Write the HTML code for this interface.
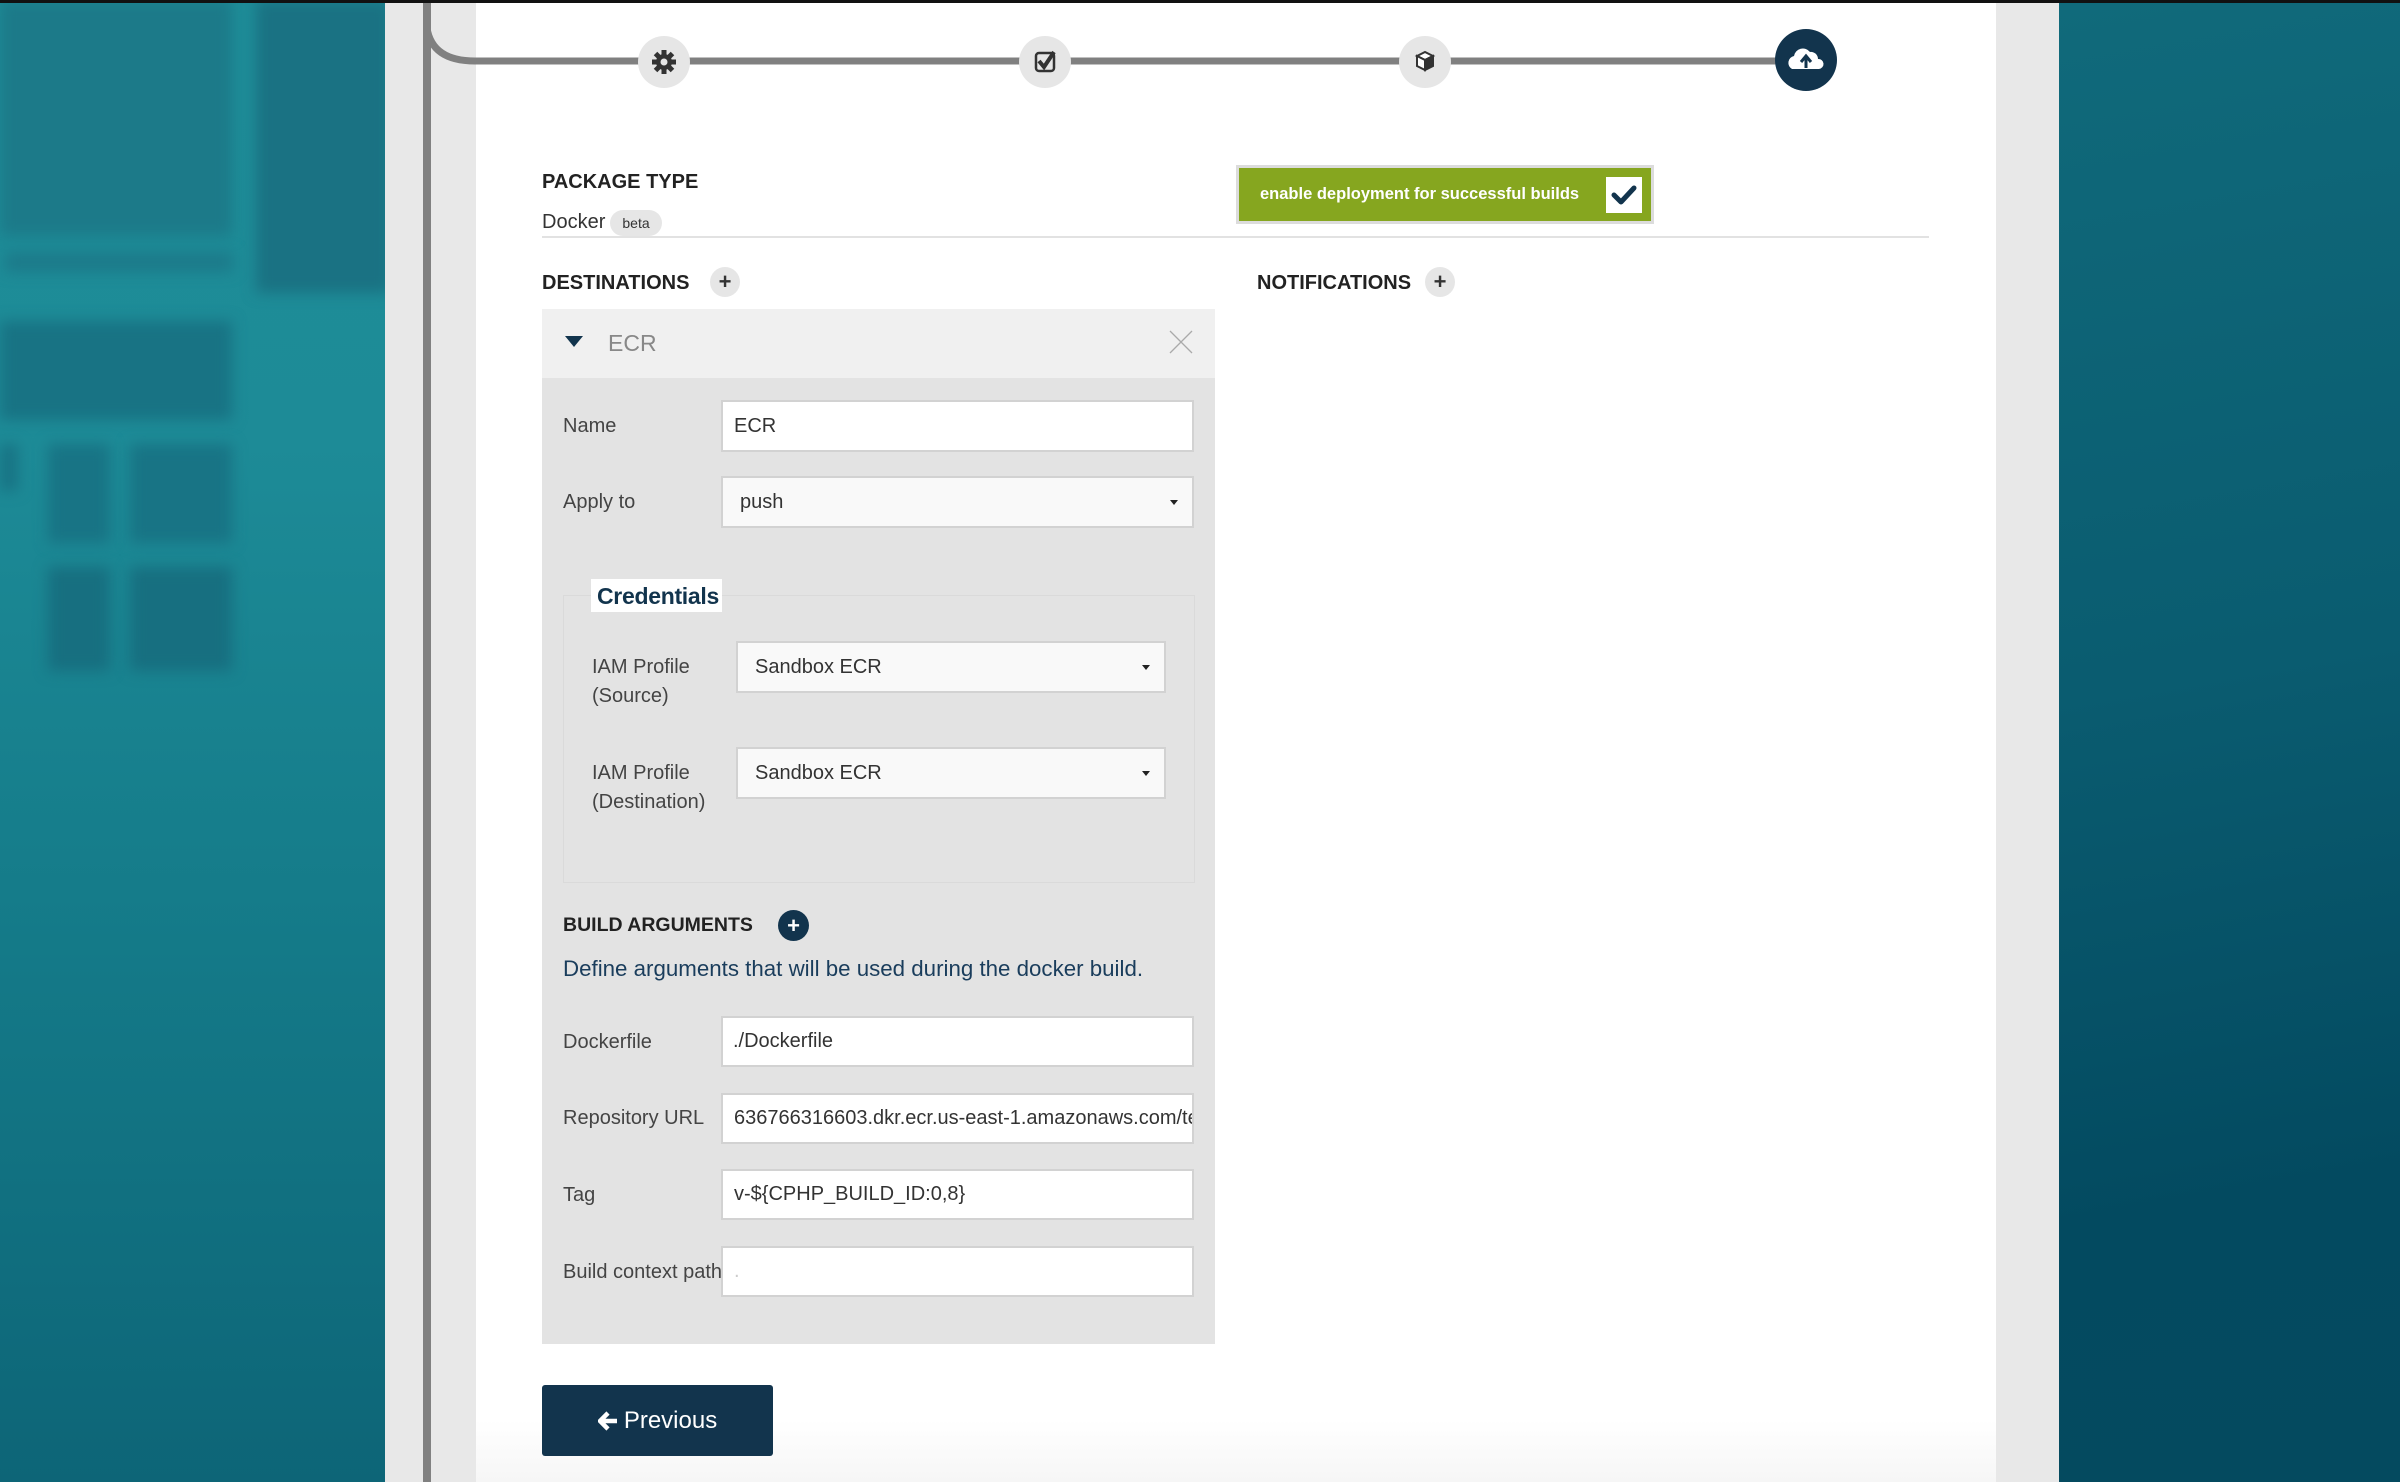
<!DOCTYPE html>
<html><head><meta charset="utf-8"><style>
*{box-sizing:border-box;margin:0;padding:0}
html,body{width:2400px;height:1482px;overflow:hidden;font-family:"Liberation Sans",Arial,sans-serif}
body{position:relative;background:#fff}
.a{position:absolute}
.lbl{position:absolute;font-size:20px;color:#444;line-height:29px}
.inp{position:absolute;background:#fff;border:2px solid #d2d2d2;font-size:20px;color:#333;padding-left:11px;display:flex;align-items:center;white-space:nowrap;overflow:hidden}
.sel{background:#f9f9f9}
.caret{position:absolute;right:14px;top:50%;margin-top:-2px;width:0;height:0;border-left:4px solid transparent;border-right:4px solid transparent;border-top:5px solid #222}
.h{position:absolute;font-size:20px;font-weight:bold;color:#222;line-height:24px}
.plus{position:absolute;width:30px;height:30px;border-radius:50%;background:#e6e6e6;color:#333;font-weight:bold;font-size:22px;text-align:center;line-height:30px}
.bl{position:absolute;filter:blur(7px)}
</style></head><body>
<!-- left teal -->
<div class="a" style="left:0;top:0;width:385px;height:1482px;background:linear-gradient(180deg,#1e8d98 0%,#1d8b97 30%,#157c8a 60%,#0d6577 100%);overflow:hidden">
  <div class="bl" style="left:0;top:0;width:232px;height:236px;background:#1c7a89"></div>
  <div class="bl" style="left:256px;top:0;width:135px;height:293px;background:#1a7283"></div>
  <div class="bl" style="left:5px;top:252px;width:228px;height:20px;background:#1c7a8a"></div>
  <div class="bl" style="left:0;top:321px;width:232px;height:99px;background:#187384"></div>
  <div class="bl" style="left:0;top:444px;width:18px;height:47px;background:#187384"></div>
  <div class="bl" style="left:48px;top:444px;width:62px;height:99px;background:#187485"></div>
  <div class="bl" style="left:130px;top:444px;width:102px;height:99px;background:#187485"></div>
  <div class="bl" style="left:48px;top:567px;width:62px;height:104px;background:#176f80"></div>
  <div class="bl" style="left:130px;top:567px;width:102px;height:104px;background:#176f80"></div>
</div>
<!-- right teal -->
<div class="a" style="left:2059px;top:0;width:341px;height:1482px;background:linear-gradient(170deg,#106a7b 0%,#0a5c70 45%,#034a60 80%,#044a5f 100%)"></div>
<!-- gray side panels -->
<div class="a" style="left:385px;top:0;width:91px;height:1482px;background:#e8e8e8"></div>
<div class="a" style="left:423px;top:0;width:8px;height:1482px;background:#808080"></div>
<div class="a" style="left:1996px;top:0;width:63px;height:1482px;background:#e8e8e8"></div>
<div class="a" style="left:476px;top:1420px;width:1520px;height:62px;background:linear-gradient(#fff,#f6f6f6)"></div>
<div class="a" style="left:0;top:0;width:2400px;height:3px;background:#111"></div>
<!-- progress -->
<svg class="a" style="left:0;top:0" width="2400" height="120">
  <path d="M427 28 Q432 61 475 61 L1790 61" stroke="#808080" stroke-width="7" fill="none"/>
  <circle cx="664" cy="62" r="26" fill="#e6e6e6"/>
  <circle cx="1045" cy="62" r="26" fill="#e6e6e6"/>
  <circle cx="1425" cy="62" r="26" fill="#e6e6e6"/>
  <circle cx="1806" cy="60" r="31" fill="#12344d"/>
  <g transform="translate(664,62)" fill="#333">
    <circle r="8"/>
    <rect x="-2.5" y="-12" width="5" height="24"/>
    <rect x="-2.5" y="-12" width="5" height="24" transform="rotate(45)"/>
    <rect x="-2.5" y="-12" width="5" height="24" transform="rotate(90)"/>
    <rect x="-2.5" y="-12" width="5" height="24" transform="rotate(135)"/>
    <circle r="3.5" fill="#e6e6e6"/>
  </g>
  <g transform="translate(1045,62)">
    <rect x="-9" y="-9" width="18" height="18" rx="3" fill="none" stroke="#333" stroke-width="2.5"/>
    <path d="M-6 -1 L-1 5 L9 -10" fill="none" stroke="#333" stroke-width="4"/>
  </g>
  <g transform="translate(1425,60)" stroke="#333" stroke-width="2" fill="#fff">
    <path d="M-8 -4 L0 -8 L8 -4 L0 0 Z"/>
    <path d="M-8 -4 L-8 6 L0 10 L0 0 Z"/>
    <path d="M8 -4 L8 6 L0 10 L0 0 Z" fill="#333"/>
  </g>
  <g transform="translate(1806,60)">
    <path d="M-14 9 A7 7 0 0 1 -12 -4 A9 9 0 0 1 4 -8 A7 7 0 0 1 12 -1 A5 5 0 0 1 13 9 Z" fill="#fff"/>
    <path d="M0 8 L0 -3 M-5 2 L0 -4 L5 2" stroke="#12344d" stroke-width="3" fill="none"/>
  </g>
</svg>
<!-- package type -->
<div class="h" style="left:542px;top:170px">PACKAGE TYPE</div>
<div class="a" style="left:542px;top:209px;font-size:20px;color:#333;line-height:26px">Docker</div>
<div class="a" style="left:610px;top:210px;width:52px;height:26px;border-radius:13px;background:#e6e6e6;font-size:14px;color:#333;text-align:center;line-height:26px">beta</div>
<div class="a" style="left:542px;top:236px;width:1387px;height:2px;background:#e2e2e2"></div>
<div class="a" style="left:1236px;top:165px;width:418px;height:59px;background:#86a61f;border:3px solid #dcdcdc"></div>
<div class="a" style="left:1260px;top:181px;font-size:16.5px;font-weight:bold;color:#fff;line-height:26px">enable deployment for successful builds</div>
<div class="a" style="left:1606px;top:177px;width:36px;height:36px;background:#fff"></div>
<svg class="a" style="left:1606px;top:177px" width="36" height="36"><path d="M8 18 L15 25 L28 11" stroke="#12344d" stroke-width="5" fill="none" stroke-linecap="round" stroke-linejoin="round"/></svg>
<!-- destinations -->
<div class="h" style="left:542px;top:271px">DESTINATIONS</div>
<div class="plus" style="left:710px;top:267px">+</div>
<div class="h" style="left:1257px;top:271px">NOTIFICATIONS</div>
<div class="plus" style="left:1425px;top:267px">+</div>
<!-- ECR panel -->
<div class="a" style="left:542px;top:309px;width:673px;height:69px;background:#f0f0f0"></div>
<div class="a" style="left:542px;top:378px;width:673px;height:966px;background:#e3e3e3"></div>
<div class="a" style="left:565px;top:336px;width:0;height:0;border-left:9px solid transparent;border-right:9px solid transparent;border-top:11px solid #12344d"></div>
<div class="a" style="left:608px;top:329px;font-size:23px;color:#888;line-height:28px">ECR</div>
<svg class="a" style="left:1168px;top:329px" width="26" height="26"><path d="M2 2 L24 24 M24 2 L2 24" stroke="#aaa" stroke-width="1.3"/></svg>

<div class="lbl" style="left:563px;top:412px">Name</div>
<div class="inp" style="left:721px;top:400px;width:473px;height:52px">ECR</div>
<div class="lbl" style="left:563px;top:488px">Apply to</div>
<div class="inp sel" style="left:721px;top:476px;width:473px;height:52px;padding-left:17px">push<span class="caret"></span></div>

<div class="a" style="left:563px;top:595px;width:632px;height:288px;border:1px solid #dadada"></div>
<div class="a" style="left:591px;top:579px;width:131px;height:33px;background:#fff"></div>
<div class="a" style="left:597px;top:581px;font-size:23px;font-weight:bold;color:#12344d;line-height:30px;letter-spacing:-0.3px">Credentials</div>

<div class="lbl" style="left:592px;top:653px;line-height:29px">IAM Profile<br>(Source)</div>
<div class="inp sel" style="left:736px;top:641px;width:430px;height:52px;padding-left:17px">Sandbox ECR<span class="caret"></span></div>
<div class="lbl" style="left:592px;top:759px;line-height:29px">IAM Profile<br>(Destination)</div>
<div class="inp sel" style="left:736px;top:747px;width:430px;height:52px;padding-left:17px">Sandbox ECR<span class="caret"></span></div>

<div class="h" style="left:563px;top:913px;font-size:19.5px">BUILD ARGUMENTS</div>
<div class="a" style="left:778px;top:910px;width:31px;height:31px;border-radius:50%;background:#12344d;color:#fff;font-weight:bold;font-size:22px;text-align:center;line-height:31px">+</div>
<div class="a" style="left:563px;top:955px;font-size:22.3px;color:#1a3d5c;line-height:28px">Define arguments that will be used during the docker build.</div>

<div class="lbl" style="left:563px;top:1028px">Dockerfile</div>
<div class="inp" style="left:721px;top:1016px;width:473px;height:51px;padding-left:10px">./Dockerfile</div>
<div class="lbl" style="left:563px;top:1104px">Repository URL</div>
<div class="inp" style="left:721px;top:1093px;width:473px;height:51px;padding-right:10px">636766316603.dkr.ecr.us-east-1.amazonaws.com/test</div>
<div class="lbl" style="left:563px;top:1181px">Tag</div>
<div class="inp" style="left:721px;top:1169px;width:473px;height:51px">v-${CPHP_BUILD_ID:0,8}</div>
<div class="lbl" style="left:563px;top:1258px">Build context path</div>
<div class="inp" style="left:721px;top:1246px;width:473px;height:51px;color:#ccc">.</div>

<div class="a" style="left:542px;top:1385px;width:231px;height:71px;background:#12344d;border-radius:3px;color:#fff;font-size:24px;display:flex;align-items:center;justify-content:center">
<svg width="20" height="20" style="margin-right:6px"><path d="M10 2 L2 10 L10 18 M2 10 L19 10" stroke="#fff" stroke-width="4.5" fill="none"/></svg>Previous</div>
</body></html>
